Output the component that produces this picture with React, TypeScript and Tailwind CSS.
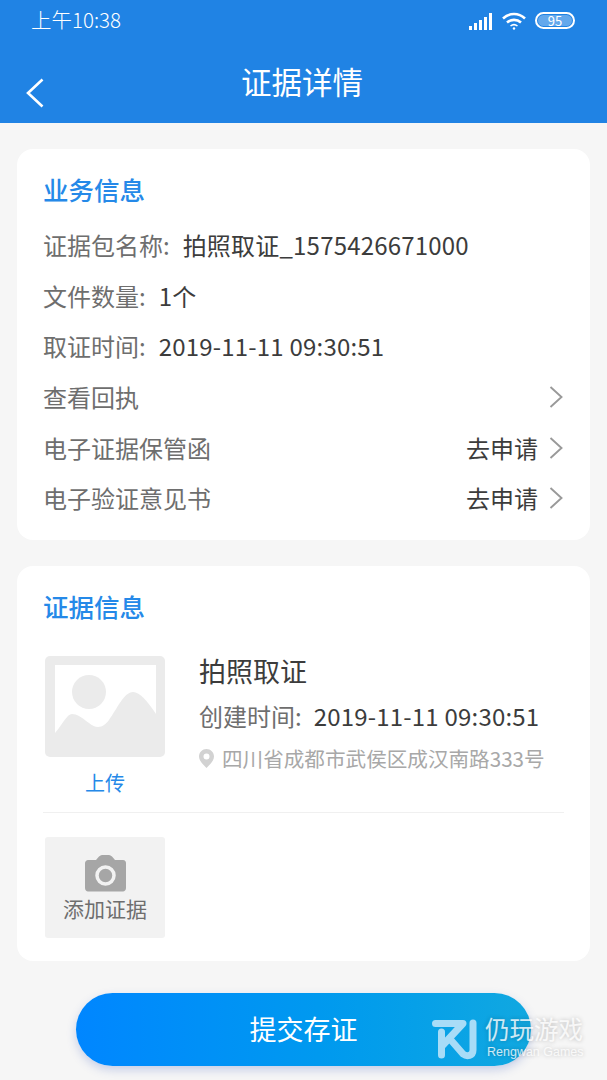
const FONT = "font-['Noto_Sans_CJK_SC','Roboto',sans-serif]";

function StatusBar() {
  return (
    <div className="flex h-[41px] items-center justify-between pl-[31px] pr-[32px] text-white">
      <span className="mb-[2px] text-[20.5px] leading-none font-light">上午10:38</span>
      <div className="flex items-center gap-[9px]">
        <svg width="24" height="18" viewBox="0 0 24 18" fill="white">
          <rect x="0" y="14" width="3" height="4" />
          <rect x="5" y="11" width="3" height="7" />
          <rect x="10" y="8" width="3" height="10" />
          <rect x="15" y="5" width="3" height="13" />
          <rect x="20" y="1" width="3" height="17" />
        </svg>
        <svg width="24" height="18" viewBox="0 0 24 18" fill="none" stroke="white" strokeWidth="2.6">
          <path d="M1 6.5C7.5 0.5 16.5 0.5 23 6.5" />
          <path d="M5 10.5C9 7 15 7 19 10.5" />
          <path d="M8.5 14C10.5 12.4 13.5 12.4 15.5 14" strokeWidth="1.6" />
          <circle cx="12" cy="16.5" r="1.2" fill="white" stroke="none" />
        </svg>
        <div className="flex h-[17px] w-[40px] items-center rounded-full border-2 border-white p-[1px]">
          <div className="flex h-full w-full items-center justify-center rounded-full bg-white/30 text-[13px] leading-none">95</div>
        </div>
      </div>
    </div>
  );
}

function Header() {
  return (
    <div className="relative h-[123px] bg-[#2083e4]">
      <StatusBar />
      <div className="mt-[20px] pr-[3px] text-center text-[30.5px] leading-[40px] text-white">证据详情</div>
      <svg className="absolute left-[26px] top-[78px]" width="18" height="30" viewBox="0 0 18 30" fill="none" stroke="white" strokeWidth="2.6">
        <path d="M16.5 1.5L2 15L16.5 28.5" />
      </svg>
    </div>
  );
}

function Chevron() {
  return (
    <svg width="14" height="22" viewBox="0 0 14 22" fill="none" stroke="#999" strokeWidth="1.9" className="ml-[11px] mr-[1px]">
      <path d="M1.5 1L12.500 11L1.500 21" />
    </svg>
  );
}

function Row({ label, value, extra, arrow }: { label: string; value?: string; extra?: string; arrow?: boolean }) {
  return (
    <div className="flex h-[50.6px] items-center text-[24px] text-[#6e6e6e]">
      <span>{label}</span>
      {value && <span className="ml-[13px] tracking-[0.2px] text-[#3c3c3c]">{value}</span>}
      {arrow && (
        <div className="ml-auto flex items-center text-[#3c3c3c]">
          {extra && <span>{extra}</span>}
          <Chevron />
        </div>
      )}
    </div>
  );
}

function PicPlaceholder() {
  return (
    <div className="flex h-[101px] w-[120px] items-start rounded-[5px] bg-[#ebebeb] pl-[10px] pt-[9px]">
      <svg width="101" height="68" viewBox="0 0 101 68">
        <path fill="white" d="M0 0H101V49C93 37 85 27 78 27C69 27 62 44 54 55C49 62 42 65 34 58C26 52 22 49 17 49C12 49 7 60 0 68Z" />
        <circle cx="34" cy="27" r="17" fill="#ebebeb" />
      </svg>
    </div>
  );
}

function CameraIcon() {
  return (
    <svg width="41" height="37" viewBox="0 0 41 37">
      <path fill="#a6a6a6" d="M3 5H11L14 1.500C15 0.500 16 0 17 0H24C25 0 26 0.500 27 1.500L30 5H38C40 5 41 6.500 41 8V33C41 35 39.500 36.500 38 36.500H3C1.500 36.500 0 35 0 33V8C0 6.500 1.500 5 3 5Z" />
      <circle cx="20.500" cy="20.500" r="8.500" fill="none" stroke="#f2f2f2" strokeWidth="3.500" />
    </svg>
  );
}

function Watermark() {
  return (
    <div className="absolute left-[432px] top-[1015px] flex items-start gap-[8px] text-white/80 [text-shadow:0_0_4px_rgba(0,0,0,0.25)]">
      <svg width="46" height="42" viewBox="0 0 46 42" className="mt-[3px]" fill="none" stroke="#a8dcf7" strokeWidth="7" strokeLinecap="round" strokeLinejoin="round">
        <path d="M3.500 5.500H31L11 27" />
        <path d="M9.500 14V37" />
        <path d="M18 21L31 36C35 39 41 38 41 32V5" />
      </svg>
      <div className="ml-[-1px] flex flex-col">
        <span className="text-[24.5px] leading-[28px]">仍玩游戏</span>
        <span className="mt-[1px] pl-[2px] font-['Liberation_Sans',sans-serif] text-[12.5px] leading-[16px]">Rengwan Games</span>
      </div>
    </div>
  );
}

export default function App() {
  return (
    <div className={`relative h-[1080px] w-[607px] overflow-hidden bg-[#f6f6f6] ${FONT}`}>
      <Header />
      <div className="flex flex-col gap-[26px] px-[17px] pt-[26px]">
        <section className="h-[391px] rounded-[16px] bg-white pl-[26px] pr-[26px] pt-[24px]">
          <h2 className="mb-[15px] text-[25.5px] leading-[32px] font-medium text-[#2589e8]">业务信息</h2>
          <Row label="证据包名称:" value="拍照取证_1575426671000" />
          <Row label="文件数量:" value="1个" />
          <Row label="取证时间:" value="2019-11-11 09:30:51" />
          <Row label="查看回执" arrow />
          <Row label="电子证据保管函" extra="去申请" arrow />
          <Row label="电子验证意见书" extra="去申请" arrow />
        </section>
        <section className="h-[395px] rounded-[16px] bg-white px-[26px] pt-[24px]">
          <h2 className="mb-[34px] text-[25.5px] leading-[32px] font-medium text-[#2589e8]">证据信息</h2>
          <div className="flex border-b border-[#f0f0f0] pb-[14px] pl-[2px]">
            <div className="flex w-[120px] flex-col items-center">
              <PicPlaceholder />
              <span className="mt-[11px] text-[20px] leading-[30px] text-[#2589e8]">上传</span>
            </div>
            <div className="ml-[34px] flex flex-col">
              <span className="mt-[-2px] text-[27px] leading-[34px] text-[#3c3c3c]">拍照取证</span>
              <div className="mt-[10px] flex text-[24px] leading-[36px]">
                <span className="text-[#6e6e6e]">创建时间:</span>
                <span className="ml-[12px] tracking-[0.2px] text-[#3c3c3c]">2019-11-11 09:30:51</span>
              </div>
              <div className="mt-[9px] flex items-center text-[20.6px] leading-[30px] text-[#a8a8a8]">
                <svg width="15" height="19" viewBox="0 0 15 19" className="mr-[8px]">
                  <path fill="#d2d2d2" fillRule="evenodd" d="M7.500 0C3.400 0 0 3.300 0 7.500C0 12 5 16.500 7.500 19C10 16.500 15 12 15 7.500C15 3.300 11.600 0 7.500 0ZM7.500 4.500A3 3 0 1 1 7.500 10.500A3 3 0 1 1 7.500 4.500Z" />
                </svg>
                四川省成都市武侯区成汉南路333号
              </div>
            </div>
          </div>
          <div className="ml-[2px] mt-[24px] flex h-[101px] w-[120px] flex-col items-center rounded-[3px] bg-[#f2f2f2] pt-[18px]">
            <CameraIcon />
            <span className="mt-[2px] text-[21px] leading-[28px] text-[#6e6e6e]">添加证据</span>
          </div>
        </section>
      </div>
      <div className="mx-auto mt-[32px] flex h-[73px] w-[455px] items-center justify-center rounded-full bg-gradient-to-r from-[#0086ff] to-[#11a8e0] text-[27px] text-white shadow-[0_4px_10px_rgba(60,90,190,0.25)]">
        提交存证
      </div>
      <Watermark />
    </div>
  );
}
